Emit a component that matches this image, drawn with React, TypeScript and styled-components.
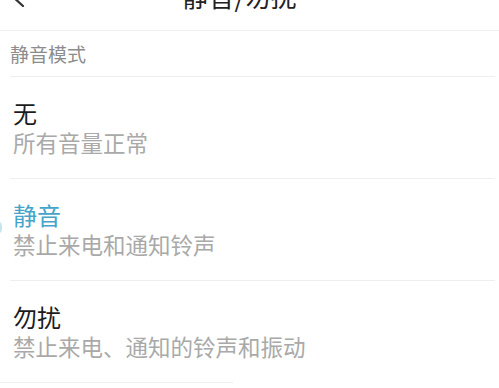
import React from "react";
import styled, { createGlobalStyle } from "styled-components";

const GlobalStyle = createGlobalStyle`
  html, body {
    margin: 0;
    padding: 0;
    background: #ffffff;
    overflow: hidden;
  }
  body {
    font-family: "Noto Sans CJK SC", "Noto Sans", sans-serif;
  }
`;

const Page = styled.div`
  width: 499px;
  height: 388px;
  overflow: hidden;
  position: relative;
`;

const TopBar = styled.div`
  height: 30px;
  display: grid;
  grid-template-columns: 30px 1fr 50px;
  align-items: start;
  border-bottom: 1px solid #efefef;
`;

const BackButton = styled.div`
  display: flex;
  margin: -15px 0 0 9px;
`;

const Title = styled.h1`
  margin: -17px 0 0;
  font-size: 26px;
  line-height: 26px;
  font-weight: 400;
  color: #222;
  text-align: center;
`;

const SectionHeader = styled.div`
  height: 45px;
  line-height: 45px;
  padding-left: 10px;
  font-size: 19px;
  color: #8c8c8c;
`;

const Divider = styled.div<{ $full?: boolean; $short?: boolean }>`
  height: 1px;
  background: #eeeeee;
  margin-left: ${(p) => (p.$full ? "0" : "10px")};
  margin-right: 4px;
  width: ${(p) => (p.$short ? "233px" : "auto")};
`;

const Row = styled.div<{ $selected?: boolean }>`
  position: relative;
  padding: 21px 13px 22px;

  ${(p) =>
    p.$selected &&
    `
    &::before {
      content: "";
      position: absolute;
      left: -3px;
      top: 43px;
      width: 5px;
      height: 11px;
      border-radius: 50%;
      background: #c5e3ef;
    }
  `}
`;

const RowTitle = styled.div<{ $active?: boolean }>`
  font-size: 24px;
  line-height: 30px;
  color: ${(p) => (p.$active ? "#45a3c9" : "#1c1c1c")};
`;

const RowSubtitle = styled.div`
  font-size: 22.5px;
  line-height: 28px;
  color: #a9a9a9;
`;

const options = [
  { title: "无", desc: "所有音量正常" },
  { title: "静音", desc: "禁止来电和通知铃声", active: true },
  { title: "勿扰", desc: "禁止来电、通知的铃声和振动" },
];

export default function App() {
  return (
    <Page>
      <GlobalStyle />
      <TopBar>
        <BackButton>
          <svg width="16" height="22" viewBox="0 0 16 22">
            <path d="M14 1 L3 11 L14 21" fill="none" stroke="#333" strokeWidth="2.2" strokeLinecap="round" strokeLinejoin="round" />
          </svg>
        </BackButton>
        <Title>静音/勿扰</Title>
        <div />
      </TopBar>
      <SectionHeader>静音模式</SectionHeader>
      <Divider />
      {options.map((o, i) => (
        <React.Fragment key={o.title}>
          <Row $selected={o.active}>
            <RowTitle $active={o.active}>{o.title}</RowTitle>
            <RowSubtitle>{o.desc}</RowSubtitle>
          </Row>
          <Divider $full={i === options.length - 1} $short={i === options.length - 1} />
        </React.Fragment>
      ))}
    </Page>
  );
}
